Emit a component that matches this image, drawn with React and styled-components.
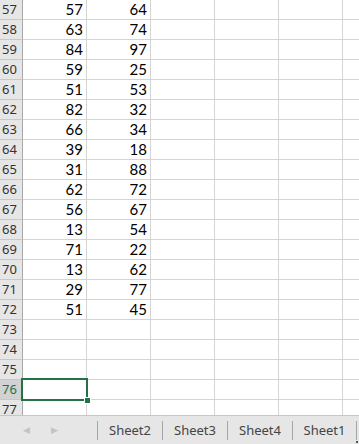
import React from 'react';
import styled, { createGlobalStyle } from 'styled-components';

const GlobalStyle = createGlobalStyle`
  html, body {
    margin: 0;
    padding: 0;
    background: #ffffff;
  }
`;

const Sheet = styled.div`
  width: 359px;
  height: 444px;
  overflow: hidden;
  display: flex;
  flex-direction: column;
  background: #ffffff;
`;

const Grid = styled.div`
  position: relative;
  height: 415px;
  overflow: hidden;
  flex-shrink: 0;
`;

const Row = styled.div`
  display: flex;
  height: 20px;
`;

const RowHead = styled.div`
  flex: 0 0 23px;
  box-sizing: border-box;
  height: 20px;
  border-right: 1px solid #a8a8a8;
  border-bottom: 1px solid #c8c8c8;
  background: ${(p) => (p.$active ? '#d2d2d2' : '#e6e6e6')};
  color: ${(p) => (p.$active ? '#217346' : '#333333')};
  font-family: 'Noto Sans', 'Open Sans', sans-serif;
  font-size: 13px;
  line-height: 19px;
  padding-left: 2px;
`;

const Cell = styled.div`
  flex: 0 0 64px;
  box-sizing: border-box;
  height: 20px;
  border-right: 1px solid #d4d4d4;
  border-bottom: 1px solid #d4d4d4;
  text-align: right;
  padding-right: 3px;
  font-family: Lato, 'Liberation Sans', sans-serif;
  font-size: 15px;
  line-height: 19px;
  color: #000000;
`;

const Selection = styled.div`
  position: absolute;
  left: 21px;
  top: 378px;
  width: 63px;
  height: 19px;
  border: 2px solid #217346;
  pointer-events: none;
`;

const Handle = styled.div`
  position: absolute;
  right: -5px;
  bottom: -5px;
  width: 5px;
  height: 5px;
  background: #217346;
  border: 1px solid #ffffff;
`;

const TabBar = styled.div`
  flex: 1;
  display: flex;
  align-items: center;
  background: #e6e6e6;
  border-top: 1px solid #c6c6c6;
  box-sizing: border-box;
  position: relative;
`;

const Nav = styled.div`
  flex: 0 0 97px;
  display: flex;
  align-items: center;
  gap: 21px;
  padding-left: 23px;
  box-sizing: border-box;
  color: #c4c4c4;
  font-size: 9px;
`;

const Tab = styled.div`
  flex: 0 0 65px;
  box-sizing: border-box;
  height: 19px;
  border-left: 1px solid #a6a6a6;
  border-right: ${(p) => (p.$last ? '1px solid #a6a6a6' : 'none')};
  display: flex;
  align-items: center;
  justify-content: center;
  font-family: 'Noto Sans', 'Open Sans', sans-serif;
  font-size: 13px;
  color: #444444;
  flex-basis: ${(p) => (p.$last ? '65px' : '65px')};
`;

const ActiveMark = styled.div`
  position: absolute;
  right: 1px;
  bottom: 1px;
  width: 2px;
  height: 2px;
  background: #217346;
`;

const data = [
  [57, 64], [63, 74], [84, 97], [59, 25], [51, 53], [82, 32], [66, 34], [39, 18],
  [31, 88], [62, 72], [56, 67], [13, 54], [71, 22], [13, 62], [29, 77], [51, 45],
];

const rows = Array.from({ length: 21 }, (_, i) => ({
  n: 57 + i,
  vals: data[i] || ['', ''],
}));

export default function App() {
  return (
    <>
      <GlobalStyle />
      <Sheet>
        <Grid>
          {rows.map((r) => (
            <Row key={r.n}>
              <RowHead $active={r.n === 76}>{r.n}</RowHead>
              <Cell>{r.vals[0]}</Cell>
              <Cell>{r.vals[1]}</Cell>
              <Cell />
              <Cell />
              <Cell />
              <Cell />
            </Row>
          ))}
          <Selection>
            <Handle />
          </Selection>
        </Grid>
        <TabBar>
          <Nav>
            <span>◀</span>
            <span>▶</span>
          </Nav>
          <Tab>Sheet2</Tab>
          <Tab>Sheet3</Tab>
          <Tab>Sheet4</Tab>
          <Tab $last>Sheet1</Tab>
          <ActiveMark />
        </TabBar>
      </Sheet>
    </>
  );
}
